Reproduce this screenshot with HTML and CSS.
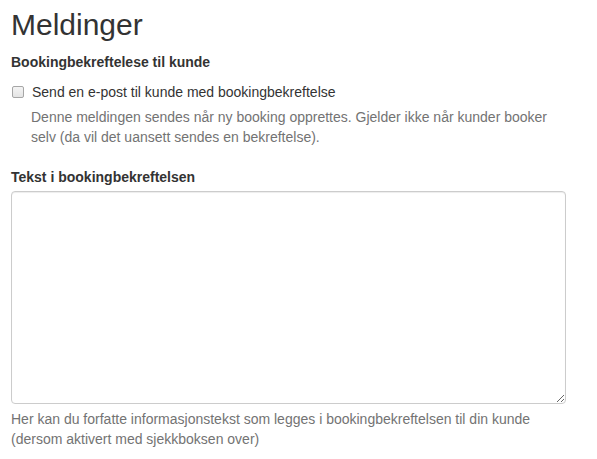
FILE: index.html
```html
<!DOCTYPE html>
<html lang="no">
<head>
<meta charset="utf-8">
<title>Meldinger</title>
<link rel="stylesheet" href="styles.css">
</head>
<body>
<div class="page">
  <h1 class="title">Meldinger</h1>
  <div class="form-group">
    <div class="label">Bookingbekreftelese til kunde</div>
    <label class="checkbox">
      <input type="checkbox" class="check">
      <span>Send en e-post til kunde med bookingbekreftelse</span>
    </label>
    <p class="help indented">Denne meldingen sendes når ny booking opprettes. Gjelder ikke når kunder booker selv (da vil det uansett sendes en bekreftelse).</p>
  </div>
  <div class="form-group">
    <label class="label label-field" for="tekst">Tekst i bookingbekreftelsen</label>
    <textarea id="tekst" class="textarea"></textarea>
    <p class="help">Her kan du forfatte informasjonstekst som legges i bookingbekreftelsen til din kunde (dersom aktivert med sjekkboksen over)</p>
  </div>
</div>
</body>
</html>
```

FILE: styles.css
```css
html, body {
  margin: 0;
  padding: 0;
  background: #fff;
}
body {
  font-family: "Liberation Sans", Arial, Helvetica, sans-serif;
  font-size: 14px;
  line-height: 20px;
  color: #333;
}
.page {
  padding: 0 31px 0 11px;
}
.title {
  font-size: 30px;
  font-weight: 400;
  line-height: 33px;
  margin: 8px 0 11px;
}
.form-group {
  margin-bottom: 20px;
}
.label {
  display: block;
  font-weight: 700;
  margin-bottom: 5px;
}
.label-field {
  margin-bottom: 4px;
}
.checkbox {
  display: flex;
  align-items: center;
  gap: 8px;
  margin-top: 10px;
  cursor: pointer;
}
.check {
  -webkit-appearance: none;
  appearance: none;
  box-sizing: border-box;
  margin: 0 0 0 1px;
  width: 12px;
  height: 12px;
  border: 1px solid #a6a6a6;
  border-radius: 2px;
  background: linear-gradient(#f4f4f4, #e4e4e4);
}
.help {
  color: #737373;
  margin: 5px 0 10px;
}
.indented {
  padding-left: 20px;
}
.textarea {
  display: block;
  box-sizing: border-box;
  width: 100%;
  height: 213px;
  border: 1px solid #ccc;
  border-radius: 4px;
  box-shadow: inset 0 1px 1px rgba(0,0,0,0.075);
  padding: 6px 12px;
  font: inherit;
  resize: vertical;
}
```
